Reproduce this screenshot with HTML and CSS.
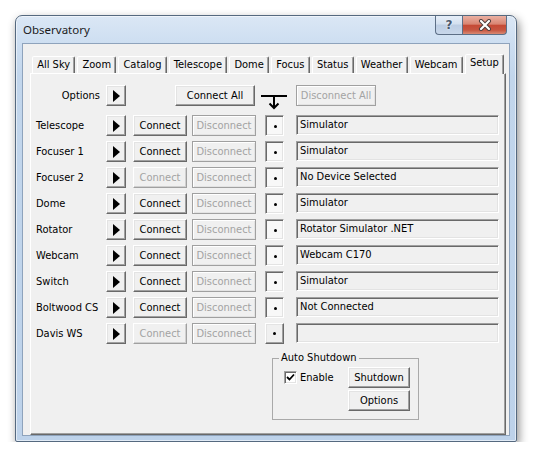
FILE: index.html
```html
<!DOCTYPE html>
<html>
<head>
<meta charset="utf-8">
<title>Observatory</title>
<link rel="stylesheet" href="styles.css">
</head>
<body>
<div class="window">
  <div class="titlebar">
    <span class="title">Observatory</span>
    <div class="caption">
      <div class="cbtn help">?</div>
      <div class="cbtn close">
        <svg width="16" height="12" viewBox="0 0 16 12">
          <path d="M4 2 L12 10 M12 2 L4 10" stroke="#4a3a3a" stroke-width="4" stroke-linecap="round" fill="none"/>
          <path d="M4 2 L12 10 M12 2 L4 10" stroke="#ffffff" stroke-width="2.2" stroke-linecap="round" fill="none"/>
        </svg>
      </div>
    </div>
  </div>
  <div class="client">
    <div class="tabs">
      <div class="tab">All Sky</div>
      <div class="tab">Zoom</div>
      <div class="tab">Catalog</div>
      <div class="tab">Telescope</div>
      <div class="tab">Dome</div>
      <div class="tab">Focus</div>
      <div class="tab">Status</div>
      <div class="tab">Weather</div>
      <div class="tab">Webcam</div>
      <div class="tab active">Setup</div>
    </div>
    <div class="panel">
      <div class="row options-row">
        <div class="label right">Options</div>
        <div class="btn arrow"><span class="tri"></span></div>
        <div class="btn connect-all ca-first">Connect All</div>
        <div class="link">
          <svg width="41" height="25" viewBox="0 0 41 25">
            <path d="M6 11 H32" stroke="#000" stroke-width="2" fill="none"/>
            <path d="M19 12 V23" stroke="#000" stroke-width="2" fill="none"/>
            <path d="M14.5 18.5 L19 23 L23.5 18.5" stroke="#000" stroke-width="2" fill="none"/>
          </svg>
        </div>
        <div class="btn connect-all disabled">Disconnect All</div>
      </div>

      <div class="row device-row first">
        <div class="label">Telescope</div>
        <div class="btn arrow"><span class="tri"></span></div>
        <div class="btn connect">Connect</div>
        <div class="btn disconnect disabled">Disconnect</div>
        <div class="btn dot pressed"><span class="pip"></span></div>
        <div class="field">Simulator</div>
      </div>
      <div class="row device-row">
        <div class="label">Focuser 1</div>
        <div class="btn arrow"><span class="tri"></span></div>
        <div class="btn connect">Connect</div>
        <div class="btn disconnect disabled">Disconnect</div>
        <div class="btn dot pressed"><span class="pip"></span></div>
        <div class="field">Simulator</div>
      </div>
      <div class="row device-row">
        <div class="label">Focuser 2</div>
        <div class="btn arrow"><span class="tri"></span></div>
        <div class="btn connect off">Connect</div>
        <div class="btn disconnect disabled">Disconnect</div>
        <div class="btn dot pressed"><span class="pip"></span></div>
        <div class="field">No Device Selected</div>
      </div>
      <div class="row device-row">
        <div class="label">Dome</div>
        <div class="btn arrow"><span class="tri"></span></div>
        <div class="btn connect">Connect</div>
        <div class="btn disconnect disabled">Disconnect</div>
        <div class="btn dot pressed"><span class="pip"></span></div>
        <div class="field">Simulator</div>
      </div>
      <div class="row device-row">
        <div class="label">Rotator</div>
        <div class="btn arrow"><span class="tri"></span></div>
        <div class="btn connect">Connect</div>
        <div class="btn disconnect disabled">Disconnect</div>
        <div class="btn dot pressed"><span class="pip"></span></div>
        <div class="field">Rotator Simulator .NET</div>
      </div>
      <div class="row device-row">
        <div class="label">Webcam</div>
        <div class="btn arrow"><span class="tri"></span></div>
        <div class="btn connect">Connect</div>
        <div class="btn disconnect disabled">Disconnect</div>
        <div class="btn dot pressed"><span class="pip"></span></div>
        <div class="field">Webcam C170</div>
      </div>
      <div class="row device-row">
        <div class="label">Switch</div>
        <div class="btn arrow"><span class="tri"></span></div>
        <div class="btn connect">Connect</div>
        <div class="btn disconnect disabled">Disconnect</div>
        <div class="btn dot pressed"><span class="pip"></span></div>
        <div class="field">Simulator</div>
      </div>
      <div class="row device-row">
        <div class="label">Boltwood CS</div>
        <div class="btn arrow"><span class="tri"></span></div>
        <div class="btn connect">Connect</div>
        <div class="btn disconnect disabled">Disconnect</div>
        <div class="btn dot pressed"><span class="pip"></span></div>
        <div class="field">Not Connected</div>
      </div>
      <div class="row device-row">
        <div class="label">Davis WS</div>
        <div class="btn arrow"><span class="tri"></span></div>
        <div class="btn connect off">Connect</div>
        <div class="btn disconnect disabled">Disconnect</div>
        <div class="btn dot"><span class="pip"></span></div>
        <div class="field"></div>
      </div>

      <fieldset class="group">
        <legend>Auto Shutdown</legend>
        <div class="group-body">
          <div class="check">
            <span class="box">
              <svg width="9" height="9" viewBox="0 0 9 9"><path d="M1 4 L3.5 6.5 L8 1.5" stroke="#000" stroke-width="1.8" fill="none"/></svg>
            </span>
            <span class="check-label">Enable</span>
          </div>
          <div class="btn gbtn">Shutdown</div>
          <div class="btn gbtn second">Options</div>
        </div>
      </fieldset>
    </div>
  </div>
</div>
</body>
</html>
```
FILE: styles.css
```css
* { box-sizing: border-box; }

body {
  margin: 0;
  background: #ffffff;
  font-family: "DejaVu Sans Condensed", "DejaVu Sans", sans-serif;
  font-size: 11px;
  color: #000;
}

.window {
  margin: 15px 0 0 15px;
  width: 502px;
  height: 427px;
  border: 1px solid #55697f;
  border-radius: 7px 7px 2px 2px;
  background: linear-gradient(180deg, #dbe7f5 0px, #cddef1 28px, #c2d6ec 60px, #bdd2ea 100%);
  box-shadow: 2px 4px 10px rgba(0, 0, 0, 0.45), inset 0 0 0 1px rgba(255, 255, 255, 0.55);
  padding: 0 6px 5px;
  display: flex;
  flex-direction: column;
}

.titlebar {
  height: 27px;
  display: flex;
  align-items: flex-start;
  justify-content: space-between;
}

.title {
  font-family: "Noto Sans", "Open Sans", sans-serif;
  font-size: 11.5px;
  line-height: 27px;
  margin-left: 1px;
  color: #1b1b1b;
}

.caption {
  display: flex;
  margin-right: 3px;
}

.cbtn {
  height: 19px;
  border: 1px solid #5d6f86;
  border-top: none;
  display: flex;
  align-items: center;
  justify-content: center;
}

.help {
  width: 27px;
  border-right: none;
  border-radius: 0 0 0 4px;
  background: linear-gradient(180deg, #e6eef8 0%, #d3e0ef 45%, #bccde3 50%, #c8d7ea 100%);
  font-family: "DejaVu Sans", sans-serif;
  font-weight: bold;
  font-size: 12px;
  color: #4b5a6e;
  text-shadow: 0 0 2px #fff;
}

.close {
  width: 45px;
  border-radius: 0 0 4px 0;
  background: linear-gradient(180deg, #eab0a2 0%, #d98572 45%, #c54a35 52%, #c65540 78%, #d98a74 100%);
}

.client {
  flex: 1;
  background: #f0f0f0;
  border: 1px solid #8ea3bc;
  padding: 10px 3px 0 7px;
  display: flex;
  flex-direction: column;
}

.tabs {
  height: 20px;
  display: flex;
  align-items: flex-end;
  padding: 0 2px 0 2px;
  margin-bottom: -1px;
  position: relative;
  z-index: 1;
}

.tab {
  flex: 1 1 auto;
  height: 17px;
  margin-bottom: 1px;
  margin-right: 2px;
  padding: 0 4px;
  border: 1px solid;
  border-bottom: none;
  border-color: #ffffff #696969 transparent #ffffff;
  border-radius: 2px 2px 0 0;
  box-shadow: inset -1px 0 #a0a0a0;
  background: #f0f0f0;
  text-align: center;
  line-height: 16px;
  white-space: nowrap;
}

.tab.active {
  height: 20px;
  margin-bottom: 0;
  margin-right: 0;
  line-height: 16px;
}

.panel {
  flex: 1;
  border: 1px solid;
  border-color: #ffffff #696969 #696969 #ffffff;
  box-shadow: inset -1px -1px #a0a0a0;
  padding: 11px 0 0 5px;
}

.row {
  display: flex;
  align-items: center;
  height: 21px;
}

.device-row { margin-top: 5px; }
.device-row.first { margin-top: 9px; }

.label {
  width: 70px;
  white-space: nowrap;
}

.label.right {
  text-align: right;
  padding-right: 6px;
}

.btn {
  height: 21px;
  display: flex;
  align-items: center;
  justify-content: center;
  background: #f0f0f0;
  border: 1px solid;
  border-color: #ffffff #696969 #696969 #ffffff;
  box-shadow: inset -1px -1px #a0a0a0, inset 1px 1px #e3e3e3;
  white-space: nowrap;
}

.btn.disabled {
  color: #a3a3a3;
  border-color: #a0a0a0;
  box-shadow: inset 1px 1px #ffffff, inset -1px -1px #e3e3e3;
}

.btn.off {
  color: #a3a3a3;
  border-color: #ffffff #a0a0a0 #a0a0a0 #ffffff;
  box-shadow: inset -1px -1px #d0d0d0;
}

.arrow { width: 20px; }

.tri {
  width: 0;
  height: 0;
  border-left: 7px solid #000;
  border-top: 6px solid transparent;
  border-bottom: 6px solid transparent;
  margin-left: 1px;
}

.connect-all { width: 80px; }
.ca-first { margin-left: 49px; }

.link {
  width: 41px;
  height: 21px;
  align-self: flex-start;
}

.link svg { display: block; overflow: visible; }

.connect { width: 54px; margin-left: 7px; }
.disconnect { width: 64px; margin-left: 5px; }

.dot { width: 19px; margin-left: 9px; }

.dot.pressed {
  background: #f8f8f8;
  border-color: #a0a0a0 #ffffff #ffffff #a0a0a0;
  box-shadow: inset 1px 1px #696969, inset -1px -1px #e3e3e3;
  padding: 1px 0 0 1px;
}

.pip {
  width: 3px;
  height: 3px;
  border-radius: 50%;
  background: #000;
}

.field {
  width: 203px;
  height: 20px;
  margin-left: 12px;
  align-self: flex-start;
  border: 1px solid;
  border-color: #a0a0a0 #ffffff #ffffff #a0a0a0;
  box-shadow: inset 1px 1px #696969, inset -1px -1px #e3e3e3;
  padding: 0 0 0 3px;
  line-height: 18px;
  white-space: nowrap;
}

.group {
  margin: 7px 0 0 236px;
  width: 147px;
  height: 69px;
  padding: 0;
  border: 1px solid #a9a9a9;
  min-inline-size: 0;
}

.group legend {
  margin-left: 6px;
  padding: 0 2px;
  line-height: 14px;
}

.group-body {
  display: grid;
  grid-template-columns: 64px 62px;
  grid-template-rows: 21px 21px;
  row-gap: 2px;
  padding: 2px 0 0 11px;
}

.check {
  display: flex;
  align-items: center;
}

.box {
  width: 13px;
  height: 13px;
  background: #fff;
  border: 1px solid;
  border-color: #a0a0a0 #ffffff #ffffff #a0a0a0;
  box-shadow: inset 1px 1px #696969, inset -1px -1px #e3e3e3;
  display: flex;
  align-items: center;
  justify-content: center;
}

.box svg { display: block; }

.check-label { margin-left: 3px; }

.gbtn { width: 62px; }
.gbtn.second { grid-column: 2; }
```
